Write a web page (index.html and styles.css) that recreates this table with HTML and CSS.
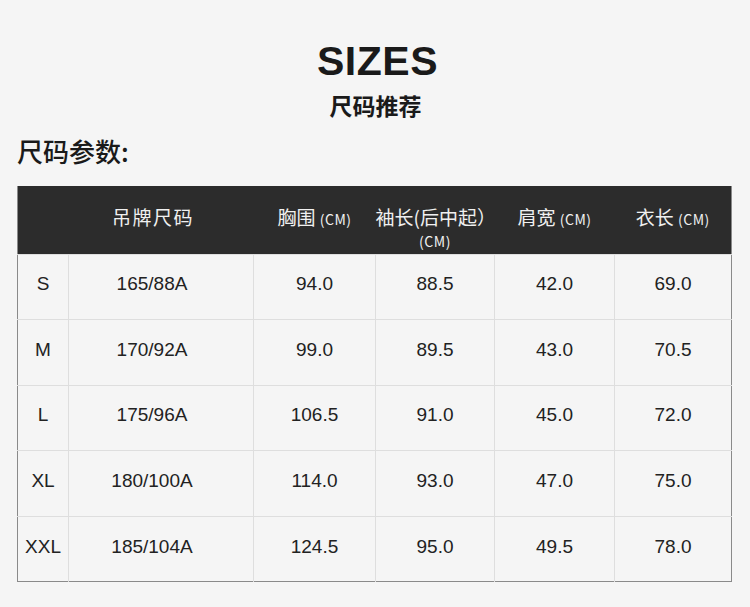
FILE: index.html
```html
<!DOCTYPE html>
<html lang="zh">
<head>
<meta charset="utf-8">
<link rel="stylesheet" href="styles.css">
</head>
<body>
<div class="page">
  <h1 class="title">SIZES</h1>
  <p class="subtitle">尺码推荐</p>
  <h2 class="section">尺码参数:</h2>
  <table class="sizes">
    <colgroup>
      <col class="c1"><col class="c2"><col class="c3"><col class="c4"><col class="c5"><col class="c6">
    </colgroup>
    <thead>
      <tr>
        <th></th>
        <th class="tag">吊牌尺码</th>
        <th>胸围 <span class="unit">(CM)</span></th>
        <th>袖长(后中起）<br><span class="unit">(CM)</span></th>
        <th>肩宽 <span class="unit">(CM)</span></th>
        <th>衣长 <span class="unit">(CM)</span></th>
      </tr>
    </thead>
    <tbody>
      <tr><td>S</td><td class="tag">165/88A</td><td>94.0</td><td>88.5</td><td>42.0</td><td>69.0</td></tr>
      <tr><td>M</td><td class="tag">170/92A</td><td>99.0</td><td>89.5</td><td>43.0</td><td>70.5</td></tr>
      <tr><td>L</td><td class="tag">175/96A</td><td>106.5</td><td>91.0</td><td>45.0</td><td>72.0</td></tr>
      <tr><td>XL</td><td class="tag">180/100A</td><td>114.0</td><td>93.0</td><td>47.0</td><td>75.0</td></tr>
      <tr><td>XXL</td><td class="tag">185/104A</td><td>124.5</td><td>95.0</td><td>49.5</td><td>78.0</td></tr>
    </tbody>
  </table>
</div>
</body>
</html>
```
FILE: styles.css
```css
html, body {
  margin: 0;
  padding: 0;
  background: #f5f5f5;
}
.page {
  padding: 33px 18px 0 17px;
  color: #1e1e1e;
}
.title {
  margin: 0;
  text-align: center;
  font-family: "Liberation Sans", Arial, sans-serif;
  font-weight: 700;
  font-size: 41px;
  line-height: 56px;
  letter-spacing: 0.5px;
  color: #1a1a1a;
  padding-left: 6px;
}
.subtitle {
  margin: 1px 0 0;
  text-align: center;
  font-family: "Noto Sans CJK SC", sans-serif;
  font-weight: 700;
  font-size: 23px;
  line-height: 30px;
  color: #1a1a1a;
  padding-left: 2px;
}
.section {
  margin: 13px 0 0;
  font-family: "Noto Sans CJK SC", sans-serif;
  font-weight: 500;
  font-size: 26px;
  line-height: 36px;
  color: #1a1a1a;
}
.sizes {
  margin-top: 17px;
  width: 715px;
  border-collapse: collapse;
  table-layout: fixed;
  border-left: 1px solid #8a8a8a;
  border-right: 1px solid #8a8a8a;
  border-bottom: 1px solid #8a8a8a;
}
.c1 { width: 51px; }
.c2 { width: 185px; }
.c3 { width: 122px; }
.c4 { width: 119px; }
.c5 { width: 120px; }
.c6 { width: 117px; }
.sizes thead tr {
  background: #2c2c2c;
  height: 68px;
}
.sizes th {
  vertical-align: top;
  padding: 20px 0 0;
  font-family: "Noto Sans CJK SC", sans-serif;
  font-weight: 400;
  font-size: 19px;
  line-height: 22px;
  color: #f0f0f0;
  text-align: center;
  white-space: nowrap;
}
.sizes th.tag { letter-spacing: 1.5px; padding-right: 16px; }
.unit {
  font-size: 14px;
  letter-spacing: 0.5px;
}
.sizes tbody tr {
  height: 65.6px;
}
.sizes td {
  border: 1px solid #dedede;
  text-align: center;
  vertical-align: middle;
  padding: 0 0 5px;
  font-family: "Liberation Sans", Arial, sans-serif;
  font-size: 19px;
  color: #222;
}
.sizes td:first-child { border-left: none; }
.sizes td:last-child { border-right: none; }
.sizes tbody tr:last-child td { border-bottom: none; }
.sizes td.tag { padding-right: 18px; }
```
